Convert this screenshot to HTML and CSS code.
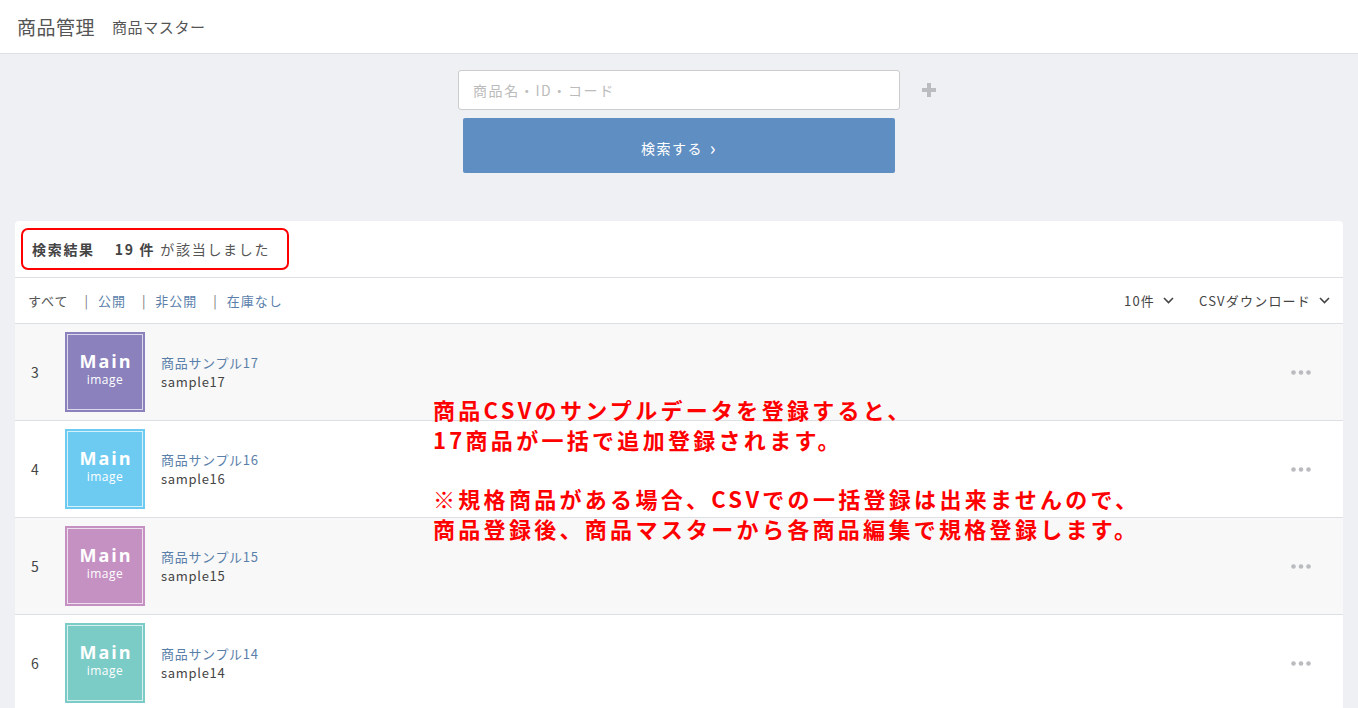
FILE: index.html
```html
<!DOCTYPE html>
<html lang="ja">
<head>
    <meta charset="UTF-8">
    <title>商品マスター</title>
    <link rel="stylesheet" href="styles.css">
</head>
<body>

    <header class="page-header">
        <h1>商品管理</h1>
        <span class="sub-title">商品マスター</span>
    </header>

    <section class="search-area">
        <div class="search-row">
            <input type="text" class="search-input" placeholder="商品名・ID・コード">
            <span class="plus-icon">
                <svg width="14" height="14" viewBox="0 0 14 14"><path d="M5 0h4v5h5v4H9v5H5V9H0V5h5z" fill="#bbbcc0"/></svg>
            </span>
        </div>
        <button class="search-button">検索する <span class="arrow">›</span></button>
    </section>

    <main class="result-panel">
        <div class="result-head">
            <div class="result-count">
                <b>検索結果</b>
                <b class="num">19 件</b>
                <span>が該当しました</span>
            </div>
        </div>

        <div class="filter-row">
            <div class="filters">
                <span class="current">すべて</span>
                <span class="sep">|</span>
                <a href="#">公開</a>
                <span class="sep">|</span>
                <a href="#">非公開</a>
                <span class="sep">|</span>
                <a href="#">在庫なし</a>
            </div>
            <div class="tools">
                <span class="dropdown">10件 <svg width="11" height="7" viewBox="0 0 11 7"><path d="M1 1l4.5 4.5L10 1" stroke="#444" stroke-width="1.6" fill="none"/></svg></span>
                <span class="dropdown">CSVダウンロード <svg width="11" height="7" viewBox="0 0 11 7"><path d="M1 1l4.5 4.5L10 1" stroke="#444" stroke-width="1.6" fill="none"/></svg></span>
            </div>
        </div>

        <ul class="product-list">
            <li class="shaded">
                <span class="row-no">3</span>
                <div class="thumb purple"><span class="main">Main</span><span class="img">image</span></div>
                <div class="info"><a href="#">商品サンプル17</a><span>sample17</span></div>
                <svg class="more" width="20" height="5" viewBox="0 0 20 5"><circle cx="2.5" cy="2.5" r="2.3"/><circle cx="10" cy="2.5" r="2.3"/><circle cx="17.5" cy="2.5" r="2.3"/></svg>
            </li>
            <li>
                <span class="row-no">4</span>
                <div class="thumb blue"><span class="main">Main</span><span class="img">image</span></div>
                <div class="info"><a href="#">商品サンプル16</a><span>sample16</span></div>
                <svg class="more" width="20" height="5" viewBox="0 0 20 5"><circle cx="2.5" cy="2.5" r="2.3"/><circle cx="10" cy="2.5" r="2.3"/><circle cx="17.5" cy="2.5" r="2.3"/></svg>
            </li>
            <li class="shaded">
                <span class="row-no">5</span>
                <div class="thumb pink"><span class="main">Main</span><span class="img">image</span></div>
                <div class="info"><a href="#">商品サンプル15</a><span>sample15</span></div>
                <svg class="more" width="20" height="5" viewBox="0 0 20 5"><circle cx="2.5" cy="2.5" r="2.3"/><circle cx="10" cy="2.5" r="2.3"/><circle cx="17.5" cy="2.5" r="2.3"/></svg>
            </li>
            <li>
                <span class="row-no">6</span>
                <div class="thumb teal"><span class="main">Main</span><span class="img">image</span></div>
                <div class="info"><a href="#">商品サンプル14</a><span>sample14</span></div>
                <svg class="more" width="20" height="5" viewBox="0 0 20 5"><circle cx="2.5" cy="2.5" r="2.3"/><circle cx="10" cy="2.5" r="2.3"/><circle cx="17.5" cy="2.5" r="2.3"/></svg>
            </li>
        </ul>
    </main>

    <!-- annotation over the list -->
    <div class="note">
        <p>商品CSVのサンプルデータを登録すると、<br>17商品が一括で追加登録されます。</p>
        <p>※規格商品がある場合、CSVでの一括登録は出来ませんので、<br>商品登録後、商品マスターから各商品編集で規格登録します。</p>
    </div>

</body>
</html>
```

FILE: styles.css
```css
/* Base */
html, body {
    margin: 0;
    padding: 0;
}

body {
    background-color: #eff0f4;
    font-family: "Noto Sans CJK JP", "Noto Sans", sans-serif;
    color: #333;
    height: 708px;
    overflow: hidden;
    position: relative;
}

/* Header */
.page-header {
    background-color: #fff;
    height: 54px;
    border-bottom: 1px solid #dfe1e6;
    display: flex;
    align-items: center;
    padding-left: 17px;
    box-sizing: border-box;
}

.page-header h1 {
    margin: 0;
    font-size: 19px;
    font-weight: normal;
    color: #555;
    letter-spacing: 0.5px;
}

.sub-title {
    margin-left: 17px;
    font-size: 15px;
    color: #555;
    letter-spacing: 0.6px;
}

/* Search */
.search-area {
    display: flex;
    flex-direction: column;
    align-items: center;
    padding-top: 16px;
    height: 167px;
    box-sizing: border-box;
}

.search-row {
    display: flex;
    align-items: center;
    padding-left: 36px;
}

.search-input {
    flex-shrink: 0;
    width: 442px;
    height: 40px;
    box-sizing: border-box;
    border: 1px solid #ccc;
    border-radius: 3px;
    padding: 0 14px;
    font-family: inherit;
    font-size: 14px;
    letter-spacing: 1.6px;
    color: #333;
}

.search-input::placeholder {
    color: #bbb;
}

.plus-icon {
    margin-left: 22px;
    display: flex;
}

.search-button {
    margin-top: 8px;
    width: 432px;
    height: 55px;
    border: none;
    border-radius: 2px;
    background-color: #5f8fc2;
    color: #fff;
    font-family: inherit;
    font-size: 14px;
    letter-spacing: 1.5px;
}

.search-button .arrow {
    font-size: 19px;
    margin-left: 2px;
    position: relative;
    top: 1px;
}

/* Result panel */
.result-panel {
    margin: 0 15px;
    background-color: #fff;
    border-radius: 4px 4px 0 0;
}

.result-head {
    height: 57px;
    border-bottom: 1px solid #dcdfe3;
    display: flex;
    align-items: center;
    padding-left: 6px;
    box-sizing: border-box;
}

.result-count {
    border: 2px solid #f00;
    border-radius: 7px;
    height: 42px;
    width: 268px;
    box-sizing: border-box;
    display: flex;
    align-items: center;
    padding-left: 9px;
    font-size: 14px;
    letter-spacing: 1.7px;
    color: #555;
}

.result-count b {
    color: #444;
}

.result-count .num {
    margin-left: 20px;
    margin-right: 5px;
}

.filter-row {
    height: 46px;
    border-bottom: 1px solid #dcdfe3;
    display: flex;
    align-items: center;
    justify-content: space-between;
    padding: 0 13px;
    font-size: 13px;
    letter-spacing: 1px;
    box-sizing: border-box;
}

.filters .current {
    color: #555;
}

.filters a {
    color: #5a80aa;
    text-decoration: none;
}

.filters .sep {
    color: #777;
    margin: 0 5px 0 12px;
}

.tools {
    display: flex;
    gap: 25px;
    letter-spacing: 1.2px;
}

.dropdown {
    color: #444;
    display: flex;
    align-items: center;
    gap: 8px;
}

/* Product rows */
.product-list {
    list-style: none;
    margin: 0;
    padding: 0;
}

.product-list li {
    height: 97px;
    border-bottom: 1px solid #dcdfe3;
    display: flex;
    align-items: center;
    box-sizing: border-box;
}

.product-list li.shaded {
    background-color: #f8f8f8;
}

.row-no {
    width: 50px;
    padding-left: 16px;
    box-sizing: border-box;
    font-size: 14px;
    color: #444;
}

.thumb {
    width: 80px;
    height: 80px;
    box-sizing: border-box;
    position: relative;
    display: flex;
    flex-direction: column;
    align-items: center;
    justify-content: center;
    padding-bottom: 6px;
    color: #fff;
    font-family: "Open Sans", "Noto Sans", sans-serif;
}

.thumb::after {
    content: "";
    position: absolute;
    inset: 2px;
    border: 1px solid rgba(255, 255, 255, 0.7);
}

.thumb .main {
    font-size: 18px;
    line-height: 20px;
    font-weight: bold;
    letter-spacing: 2px;
    padding-left: 2px;
}

.thumb .img {
    font-size: 12px;
    line-height: 14px;
    letter-spacing: 0.5px;
    margin-top: 2px;
}

.thumb.purple { background-color: #8b81bd; }
.thumb.blue { background-color: #6dcbf2; }
.thumb.pink { background-color: #c590c2; }
.thumb.teal { background-color: #7bcbc7; }

.info {
    flex: 1;
    margin-left: 16px;
    display: flex;
    flex-direction: column;
    font-size: 13px;
    line-height: 19px;
    letter-spacing: 0.7px;
}

.info a {
    color: #5a80aa;
    text-decoration: none;
}

.info span {
    color: #444;
}

.more {
    fill: #b9bbbf;
    margin-right: 32px;
}

/* Red annotation on top of the list */
.note {
    position: absolute;
    left: 433px;
    top: 395px;
    color: #f00;
    font-size: 22px;
    font-weight: bold;
    letter-spacing: 3.3px;
    line-height: 29.5px;
}

.note p {
    margin: 0 0 30px 0;
}
```
